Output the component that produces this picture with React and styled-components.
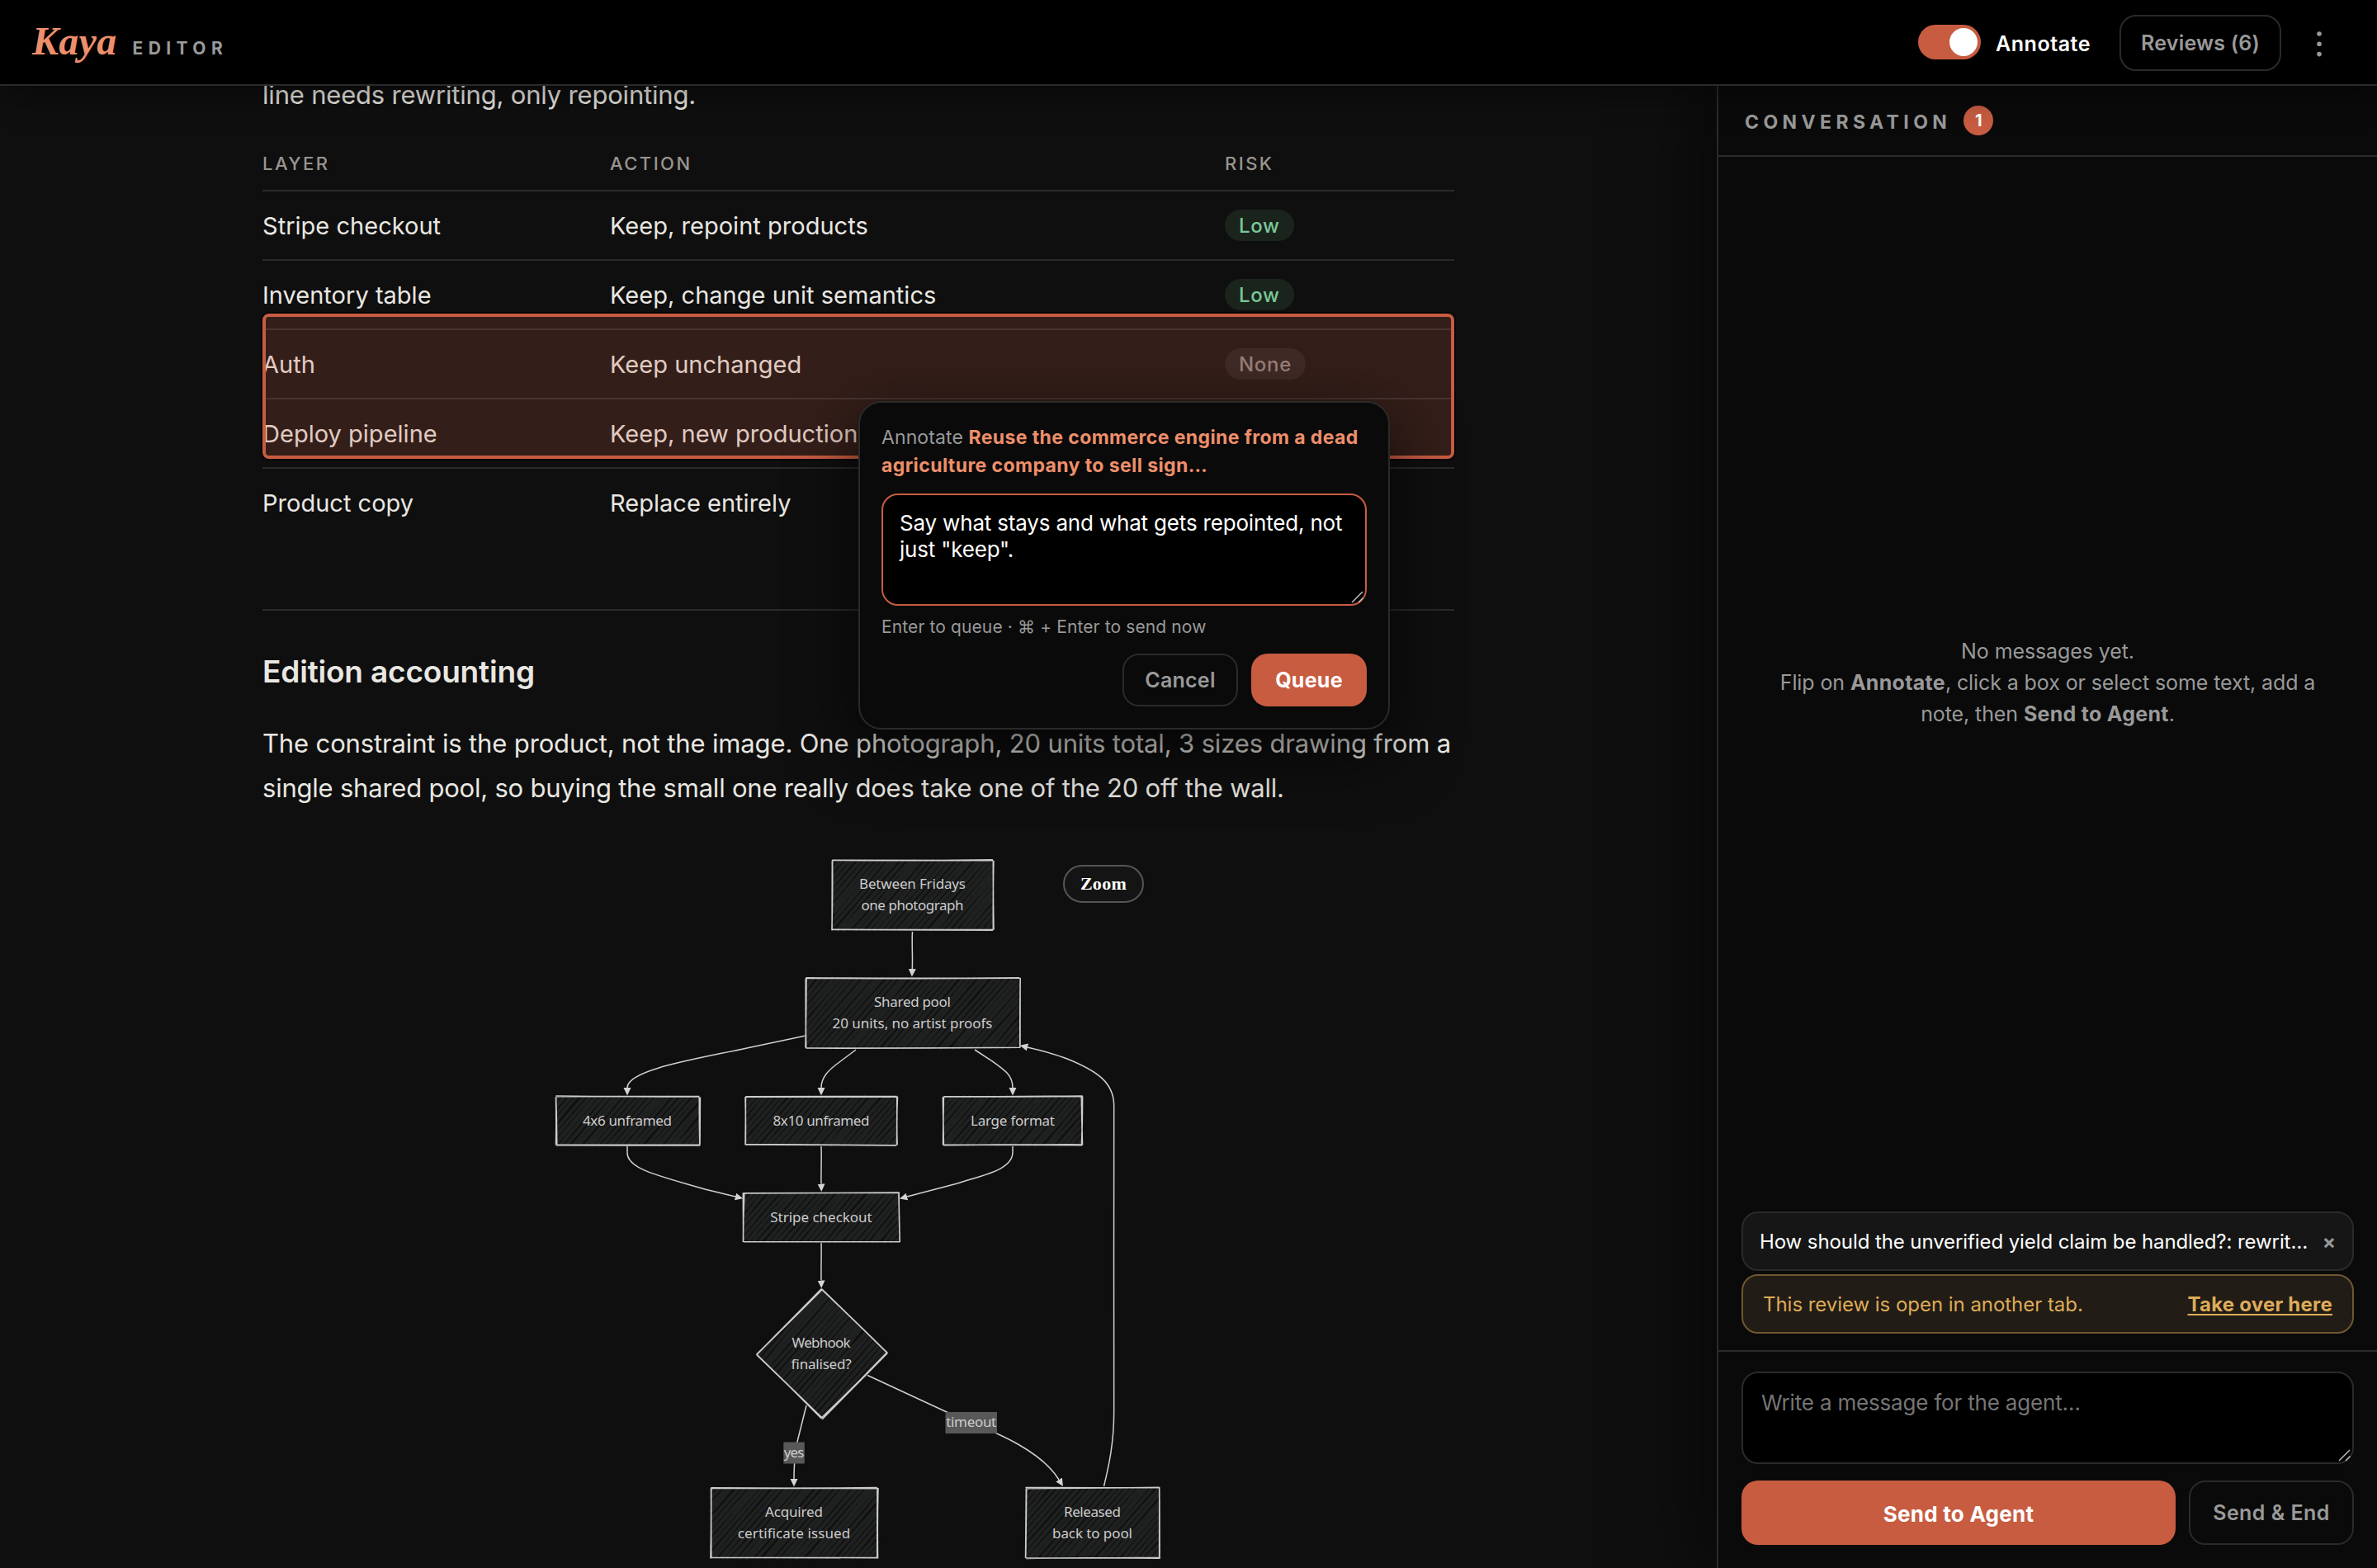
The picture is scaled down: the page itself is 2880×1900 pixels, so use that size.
import React from "react";
import styled, { createGlobalStyle } from "styled-components";

const ACCENT = "#c75c41";
const SANS = `Inter, "Liberation Sans", sans-serif`;
const SERIF = `"Liberation Serif", serif`;

const GlobalStyle = createGlobalStyle`
  *, *::before, *::after { box-sizing: border-box; }
  body { margin: 0; background: #0f0f0f; }
  button { appearance: none; margin: 0; cursor: pointer; }
  p, h2 { margin: 0; }
`;

const Page = styled.div`
  display: flex;
  flex-direction: column;
  width: 2880px;
  height: 1900px;
  overflow: hidden;
  background: #0f0f0f;
  color: #e9e7e2;
  font-family: ${SANS};
`;

/* ---------- top bar ---------- */

const TopBar = styled.header`
  position: relative;
  z-index: 3;
  display: flex;
  flex: none;
  align-items: flex-start;
  justify-content: space-between;
  height: 104px;
  padding: 0 58px 0 39px;
  background: #000;
  border-bottom: 2px solid #2a2a2a;
  box-shadow: 0 8px 40px rgba(0, 0, 0, 0.45);
`;

const Brand = styled.div`
  display: flex;
  align-items: baseline;
  gap: 19px;
  line-height: 100px;
`;

const BrandName = styled.span`
  color: #ee8f6b;
  font: italic 700 48px/100px ${SERIF};
  letter-spacing: 0.3px;
`;

const BrandTag = styled.span`
  color: #9a9a9a;
  font-size: 21px;
  font-weight: 700;
  letter-spacing: 6.4px;
`;

const TopActions = styled.div`
  display: flex;
  align-items: center;
  height: 102px;
`;

const ToggleTrack = styled.div`
  display: flex;
  justify-content: flex-end;
  width: 76px;
  height: 42px;
  padding: 4px;
  border-radius: 21px;
  background: ${ACCENT};
`;

const ToggleKnob = styled.div`
  width: 34px;
  height: 34px;
  border-radius: 50%;
  background: #fff;
`;

const ToggleLabel = styled.span`
  width: 168px;
  padding: 3px 0 0 18px;
  color: #fff;
  font-size: 25px;
  font-weight: 600;
  letter-spacing: 0.55px;
`;

const OutlineButton = styled.button`
  flex: none;
  width: ${(p) => p.$width}px;
  height: ${(p) => p.$height}px;
  padding: 0;
  border: 2px solid #2a2a2a;
  border-radius: 20px;
  background: transparent;
  color: #999;
  font: 600 25px/1 ${SANS};
  letter-spacing: ${(p) => p.$tracking}px;
`;

const ReviewsButton = styled(OutlineButton)`
  margin: 2px 34px 0 0;
`;

/* ---------- document ---------- */

const Workspace = styled.div`
  display: flex;
  flex: 1;
  min-height: 0;
`;

const Document = styled.main`
  position: relative;
  flex: 1;
  min-width: 0;
  overflow: hidden;
`;

const Article = styled.article`
  width: 1444px;
  margin: -16px auto 0;
`;

const Paragraph = styled.p`
  color: #e9e7e2;
  font-size: 31px;
  line-height: 54px;
  letter-spacing: -0.19px;
`;

const Line = styled.span`
  display: block;
  white-space: nowrap;
  letter-spacing: ${(p) => p.$tracking}px;
`;

const Row = styled.div`
  display: grid;
  grid-template-columns: 421px 745px 1fr;
  align-items: center;
  height: ${(p) => (p.$last ? 82 : 84)}px;
  border-bottom: ${(p) => (p.$last ? "none" : "2px solid #2a2a2e")};
  font-size: 29px;
  letter-spacing: 0.02px;
`;

const HeadRow = styled(Row)`
  height: 66px;
  margin-top: 24px;
  color: #9a948f;
  font-size: 22px;
  font-weight: 500;
  letter-spacing: 2.45px;
`;

const pillTones = {
  low: { bg: "#1a241d", fg: "#7cc898" },
  none: { bg: "#1f1e1f", fg: "#8e8a86" },
};

const Pill = styled.span`
  display: inline-flex;
  align-items: center;
  justify-self: start;
  height: 38px;
  padding: 0 17px;
  border-radius: 19px;
  background: ${(p) => pillTones[p.$tone].bg};
  color: ${(p) => pillTones[p.$tone].fg};
  font-size: 24px;
  font-weight: 550;
  letter-spacing: 0.7px;
`;

const Rule = styled.hr`
  height: 2px;
  margin: 88px 0 51px;
  border: 0;
  background: #2a2a2e;
`;

const Heading = styled.h2`
  margin-bottom: 37px;
  font-size: 37px;
  font-weight: 600;
  line-height: 46px;
  letter-spacing: -0.18px;
`;

const Selection = styled.div`
  position: absolute;
  top: 276px;
  left: 318px;
  width: 1444px;
  height: 176px;
  border: 4px solid ${ACCENT};
  border-radius: 8px;
  background: rgba(200, 92, 64, 0.2);
  background-clip: padding-box;
  box-shadow: 0 0 0 2px rgba(0, 0, 0, 0.5);
`;

/* ---------- annotation popup ---------- */

const Popup = styled.section`
  position: absolute;
  top: 382px;
  left: 1040px;
  width: 644px;
  height: 398px;
  padding: 25px 26px 26px;
  border: 2px solid #2a2a2a;
  border-radius: 28px;
  background: #0a0a0a;
  box-shadow: 0 24px 80px rgba(0, 0, 0, 0.7);
`;

const PopupTitle = styled.p`
  margin-bottom: 17px;
  color: #999;
  font-size: 23px;
  line-height: 34px;
  letter-spacing: 0.1px;
  white-space: nowrap;

  strong {
    color: #ee8f6b;
    font-weight: 700;
    letter-spacing: 0.4px;
  }
`;

const Field = styled.div`
  position: relative;
  height: ${(p) => p.$height}px;
  padding: ${(p) => p.$pad};
  border: 2px solid ${(p) => (p.$focused ? ACCENT : "#2a2a2a")};
  border-radius: 20px;
  background: #000;
  color: ${(p) => (p.$focused ? "#fff" : "#757575")};
  font-size: 26px;
  line-height: 32px;
  letter-spacing: -0.18px;
`;

const GripSvg = styled.svg`
  position: absolute;
  right: 1px;
  bottom: 1px;
`;

const Hint = styled.p`
  margin-top: 12px;
  color: #999;
  font-size: 21px;
  line-height: 28px;
  letter-spacing: 0.12px;
`;

const ButtonRow = styled.div`
  display: flex;
  justify-content: flex-end;
  gap: 16px;
  margin-top: ${(p) => p.$top}px;
`;

const SolidButton = styled.button`
  flex: ${(p) => (p.$grow ? "1" : "none")};
  width: ${(p) => p.$width}px;
  height: ${(p) => p.$height}px;
  padding: ${(p) => (p.$grow ? "3px 0 0" : 0)};
  border: 0;
  border-radius: 20px;
  background: ${ACCENT};
  color: #fff;
  font: 700 ${(p) => (p.$grow ? 26 : 25)}px/1 ${SANS};
  letter-spacing: 0.28px;
`;

/* ---------- sidebar ---------- */

const Sidebar = styled.aside`
  position: relative;
  z-index: 2;
  display: flex;
  flex: none;
  flex-direction: column;
  width: 800px;
  border-left: 2px solid #2a2a2a;
  background: #0a0a0a;
  box-shadow: -24px 0 80px rgba(0, 0, 0, 0.5);
`;

const SidebarHeader = styled.div`
  display: flex;
  flex: none;
  align-items: center;
  gap: 15px;
  height: 86px;
  padding-left: 32px;
  border-bottom: 2px solid #2a2a2a;
`;

const SidebarTitle = styled.span`
  padding-top: 3px;
  color: #999;
  font-size: 23px;
  font-weight: 700;
  letter-spacing: 5.4px;
`;

const Badge = styled.span`
  display: flex;
  align-items: center;
  justify-content: center;
  width: 36px;
  height: 36px;
  border-radius: 50%;
  background: ${ACCENT};
  color: #fff;
  font-size: 20px;
  font-weight: 700;
`;

const Empty = styled.div`
  display: flex;
  flex: 1;
  align-items: center;
  justify-content: center;
  color: #999;
  font-size: 25px;
  line-height: 38px;
  letter-spacing: -0.1px;
  text-align: center;

  strong {
    font-weight: 700;
    letter-spacing: 0.28px;
  }
`;

const EmptyText = styled.p`
  width: 672px;
`;

const Tray = styled.div`
  display: flex;
  flex: none;
  flex-direction: column;
  gap: 4px;
  padding: 4px 28px 20px;
`;

const Chip = styled.div`
  display: flex;
  align-items: center;
  justify-content: space-between;
  height: 72px;
  padding: 0 20px 0 20px;
  border: 2px solid #2a2a2a;
  border-radius: 20px;
  background: #161616;
  color: #fff;
  font-size: 24px;
  letter-spacing: -0.09px;
  white-space: nowrap;
`;

const CloseGlyph = styled.span`
  color: #999;
  font-size: 24px;
  font-weight: 700;
`;

const Notice = styled(Chip)`
  padding: 0 24px;
  border-color: #6f5731;
  background: #211c15;
  color: #dfab59;
  letter-spacing: -0.04px;
`;

const NoticeAction = styled.span`
  font-weight: 700;
  letter-spacing: 0.23px;
  text-decoration: underline;
  text-decoration-thickness: 2px;
  text-underline-offset: 3px;
  text-decoration-skip-ink: none;
`;

const Composer = styled.div`
  flex: none;
  padding: 24px 28px 28px;
  border-top: 2px solid #2a2a2a;
`;

/* ---------- diagram ---------- */

const Figure = styled.figure`
  position: relative;
  width: 760px;
  margin: 48px auto 0;
`;

const DiagramSvg = styled.svg`
  display: block;
  overflow: visible;
`;

const NodeText = styled.text`
  fill: #ccc;
  font-family: "Noto Sans", sans-serif;
  font-size: 17px;
  text-anchor: middle;
`;

const ZoomButton = styled.button`
  position: absolute;
  top: 18px;
  right: 34px;
  width: 98px;
  height: 46px;
  padding: 0;
  border: 2px solid #555;
  border-radius: 23px;
  background: #141414;
  color: #fff;
  font: 700 22px/1 ${SERIF};
  letter-spacing: 0.3px;
`;

const makeRandom = (seed) => {
  let s = seed * 7919 + 17;
  return () => {
    s = (s * 16807) % 2147483647;
    return s / 2147483647 - 0.5;
  };
};

/* Hachure strokes: parallel lines across a convex polygon, drawn twice with loose ends. */
const hachure = (points, seed) => {
  const rnd = makeRandom(seed);
  const a = (49 * Math.PI) / 180;
  const c = Math.cos(a);
  const s = Math.sin(a);
  const turned = points.map(([x, y]) => [x * c - y * s, x * s + y * c]);
  const ys = turned.map((p) => p[1]);
  const end = Math.max(...ys);
  let d = "";
  for (let v = Math.min(...ys) + 2.5; v < end; v += 5.65) {
    const hits = [];
    turned.forEach(([x1, y1], i) => {
      const [x2, y2] = turned[(i + 1) % turned.length];
      if (y1 <= v !== y2 <= v) hits.push(x1 + ((v - y1) / (y2 - y1)) * (x2 - x1));
    });
    if (hits.length < 2) continue;
    hits.sort((m, n) => m - n);
    const point = (u, w) => `${(u * c + w * s).toFixed(1)} ${(w * c - u * s).toFixed(1)}`;
    for (let k = 0; k < 2; k += 1) {
      const u1 = hits[0] + rnd() * 2;
      const u2 = hits[1] + rnd() * 2;
      const um = u1 + (u2 - u1) * (0.5 + rnd() * 0.4);
      d += `M${point(u1, v + rnd() * 2.4)}Q${point(um, v + rnd() * 2.6)} ${point(u2, v + rnd() * 2.4)}`;
    }
  }
  return d;
};

/* Outline: every side drawn twice with a slight wobble. */
const sketchOutline = (points, seed) => {
  const rnd = makeRandom(seed + 50);
  let d = "";
  points.forEach(([x1, y1], i) => {
    const [x2, y2] = points[(i + 1) % points.length];
    for (let k = 0; k < 2; k += 1) {
      const j = () => rnd() * 1.5;
      const mx = (x1 + x2) / 2 + j();
      const my = (y1 + y2) / 2 + j();
      d += `M${x1 + j()} ${y1 + j()}Q${mx} ${my} ${x2 + j()} ${y2 + j()}`;
    }
  });
  return d;
};

const box = (l, t, r, b) => [[l, t], [r, t], [r, b], [l, b]];

const nodes = [
  { shape: box(1008.5, 1042.5, 1203.5, 1127), x: 1105.5, lines: [["Between Fridays", 1077.3, 129], ["one photograph", 1103.3, 124]] },
  { shape: box(976.5, 1185.3, 1235.7, 1269.8), x: 1105.5, lines: [["Shared pool", 1220, 93], ["20 units, no artist proofs", 1246, 194]] },
  { shape: box(674, 1328.7, 847.8, 1387.3), x: 760, lines: [["4x6 unframed", 1364, 108]] },
  { shape: box(903.5, 1328.7, 1086.8, 1387.3), x: 995, lines: [["8x10 unframed", 1364, 117]] },
  { shape: box(1143, 1328.7, 1311, 1387.3), x: 1227, lines: [["Large format", 1364, 102]] },
  { shape: box(901, 1445.7, 1089.5, 1504.5), x: 995, lines: [["Stripe checkout", 1480.7, 123.5]] },
  { shape: [[995.7, 1562], [1075, 1639.5], [995.7, 1719], [917, 1641]], x: 995, lines: [["Webhook", 1633.3, 71], ["finalised?", 1659.3, 73]] },
  { shape: box(861.3, 1803.2, 1063.3, 1887.8), x: 962, lines: [["Acquired", 1838, 70], ["certificate issued", 1864, 136.5]] },
  { shape: box(1243, 1803.2, 1405, 1887.8), x: 1323.5, lines: [["Released", 1838, 69], ["back to pool", 1864, 97]] },
];

const edges = [
  "M1105.5 1129C1104.6 1142 1106 1158 1105.3 1174",
  "M976 1255L905 1270C845 1283 760 1296 760 1318",
  "M1037 1272L1017 1287C1003 1297 995 1306 995 1318",
  "M1181 1272L1201 1285C1218 1297 1227 1303 1227 1318",
  "M760 1389V1397C760 1417 800 1425 854 1441L891 1450",
  "M995 1389C995.6 1404 994.6 1420 995 1434.5",
  "M1227 1389V1396C1227 1418 1190 1424 1160 1434L1099 1450",
  "M995 1506C995.5 1520 994.6 1536 995 1551.5",
  "M977 1703L966 1747C964 1757 962 1768 962 1792",
  "M1050 1666L1147 1711C1190 1730 1258 1752 1283 1793",
  "M1337.5 1801C1343 1778 1349.7 1750 1349.7 1710C1348.6 1590 1350.4 1460 1349.7 1340C1349.7 1312 1330 1298 1293 1283C1278 1277 1262 1273 1245 1269",
];

const edgeLabels = [
  { text: "timeout", x: 1145.5, y: 1711, w: 62.5, h: 26, baseline: 1729, length: 61 },
  { text: "yes", x: 949.3, y: 1747.5, w: 25.5, h: 26, baseline: 1766, length: 24.5 },
];

const Diagram = () => (
  <DiagramSvg width="760" height="866" viewBox="660 1030 760 866">
    <defs>
      <marker id="arrow" markerUnits="userSpaceOnUse" markerWidth="12" markerHeight="12" refX="0" refY="5" orient="auto">
        <path d="M0 0.5L9.5 5L0 9.5Z" fill="#d4d4d4" />
      </marker>
    </defs>
    {edges.map((d) => (
      <path key={d} d={d} fill="none" stroke="#d0d0d0" strokeWidth="1.5" markerEnd="url(#arrow)" />
    ))}
    {edgeLabels.map((l) => (
      <g key={l.text}>
        <rect x={l.x} y={l.y} width={l.w} height={l.h} fill="#585858" />
        <NodeText x={l.x + l.w / 2} y={l.baseline} textLength={l.length}>{l.text}</NodeText>
      </g>
    ))}
    {nodes.map((n, i) => (
      <g key={n.lines[0][0]}>
        <path d={hachure(n.shape, i + 1)} fill="none" stroke="#1f2020" strokeWidth="4" />
        <path d={sketchOutline(n.shape, i + 1)} fill="none" stroke="#ccc" strokeWidth="1.6" />
        {n.lines.map(([text, y, length]) => (
          <NodeText key={text} x={n.x} y={y} textLength={length}>{text}</NodeText>
        ))}
      </g>
    ))}
  </DiagramSvg>
);

const Grip = () => (
  <GripSvg width="16" height="16" viewBox="0 0 16 16" fill="none" stroke="#bbb" strokeWidth="1.5">
    <path d="M1 15L14 2M9 15L14.5 9.5" />
  </GripSvg>
);

const rows = [
  { layer: "Stripe checkout", action: "Keep, repoint products", risk: "Low", tone: "low" },
  { layer: "Inventory table", action: "Keep, change unit semantics", risk: "Low", tone: "low" },
  { layer: "Auth", action: "Keep unchanged", risk: "None", tone: "none" },
  { layer: "Deploy pipeline", action: "Keep, new production" },
  { layer: "Product copy", action: "Replace entirely" },
];

export default function App() {
  return (
    <>
      <GlobalStyle />
      <Page>
        <TopBar>
          <Brand>
            <BrandName>Kaya</BrandName>
            <BrandTag>EDITOR</BrandTag>
          </Brand>
          <TopActions>
            <ToggleTrack>
              <ToggleKnob />
            </ToggleTrack>
            <ToggleLabel>Annotate</ToggleLabel>
            <ReviewsButton $width={196} $height={68} $tracking={0.22}>Reviews (6)</ReviewsButton>
            <svg width="24" height="36" viewBox="0 0 24 36" fill="#999">
              <circle cx="12" cy="8" r="2.8" />
              <circle cx="12" cy="20.3" r="2.8" />
              <circle cx="12" cy="32.6" r="2.8" />
            </svg>
          </TopActions>
        </TopBar>

        <Workspace>
          <Document>
            <Article>
              <Paragraph>line needs rewriting, only repointing.</Paragraph>
              <HeadRow>
                <span>LAYER</span>
                <span>ACTION</span>
                <span>RISK</span>
              </HeadRow>
              {rows.map((r, i) => (
                <Row key={r.layer} $last={i === rows.length - 1}>
                  <span>{r.layer}</span>
                  <span>{r.action}</span>
                  {r.risk && <Pill $tone={r.tone}>{r.risk}</Pill>}
                </Row>
              ))}
              <Rule />
              <Heading>Edition accounting</Heading>
              <Paragraph>
                <Line $tracking={-0.14}>
                  The constraint is the product, not the image. One photograph, 20 units total, 3 sizes drawing from a
                </Line>
                <Line $tracking={-0.22}>
                  single shared pool, so buying the small one really does take one of the 20 off the wall.
                </Line>
              </Paragraph>
              <Figure>
                <Diagram />
                <ZoomButton>Zoom</ZoomButton>
              </Figure>
            </Article>

            <Selection />

            <Popup>
              <PopupTitle>
                Annotate <strong>Reuse the commerce engine from a dead<br />agriculture company to sell sign…</strong>
              </PopupTitle>
              <Field $focused $height={136} $pad="18px 14px 0 20px">
                Say what stays and what gets repointed, not just "keep".
                <Grip />
              </Field>
              <Hint>Enter to queue · ⌘ + Enter to send now</Hint>
              <ButtonRow $top={18}>
                <OutlineButton $width={140} $height={64} $tracking={0.22}>Cancel</OutlineButton>
                <SolidButton $width={140} $height={64}>Queue</SolidButton>
              </ButtonRow>
            </Popup>
          </Document>

          <Sidebar>
            <SidebarHeader>
              <SidebarTitle>CONVERSATION</SidebarTitle>
              <Badge>1</Badge>
            </SidebarHeader>
            <Empty>
              <EmptyText>
                No messages yet.
                <br />
                Flip on <strong>Annotate</strong>, click a box or select some text, add a note, then{" "}
                <strong>Send to Agent</strong>.
              </EmptyText>
            </Empty>
            <Tray>
              <Chip>
                <span>How should the unverified yield claim be handled?: rewrit…</span>
                <CloseGlyph>×</CloseGlyph>
              </Chip>
              <Notice>
                <span>This review is open in another tab.</span>
                <NoticeAction>Take over here</NoticeAction>
              </Notice>
            </Tray>
            <Composer>
              <Field $height={112} $pad="20px 20px 0 22px">
                Write a message for the agent…
                <Grip />
              </Field>
              <ButtonRow $top={20}>
                <SolidButton $grow $height={78}>Send to Agent</SolidButton>
                <OutlineButton $width={200} $height={78} $tracking={0.45}>Send &amp; End</OutlineButton>
              </ButtonRow>
            </Composer>
          </Sidebar>
        </Workspace>
      </Page>
    </>
  );
}
